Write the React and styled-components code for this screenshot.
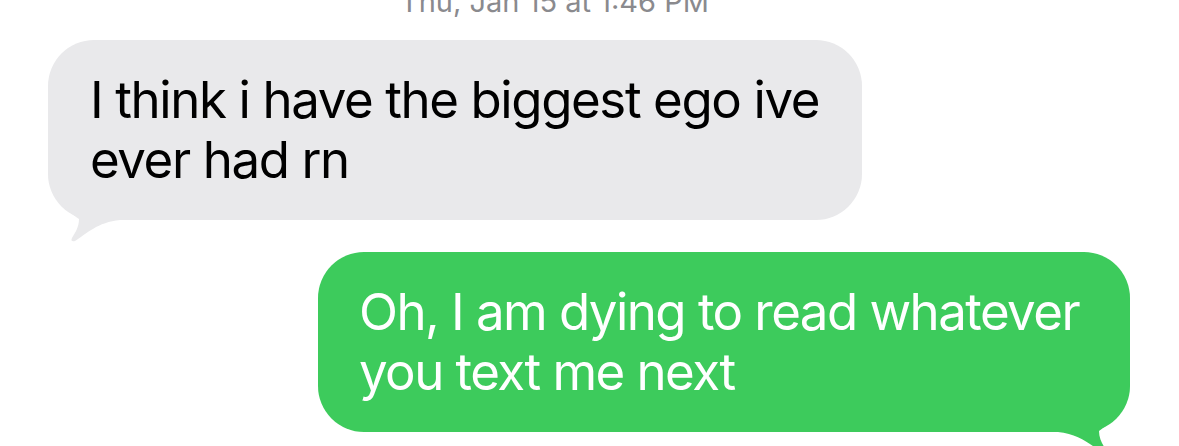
import React from "react";
import styled, { createGlobalStyle } from "styled-components";

const GlobalStyle = createGlobalStyle`
  html, body {
    margin: 0;
    padding: 0;
    background: #ffffff;
  }
  body {
    font-family: Inter, "Noto Sans", "Liberation Sans", sans-serif;
    -webkit-font-smoothing: antialiased;
  }
`;

const Thread = styled.div`
  width: 1179px;
  height: 446px;
  overflow: hidden;
  box-sizing: border-box;
  padding: 0 49px 0 48px;
  display: flex;
  flex-direction: column;
`;

const Timestamp = styled.div`
  margin-top: -16px;
  padding-left: 352px;
  font-size: 29px;
  line-height: 36px;
  color: #8a8a8e;
  white-space: nowrap;
`;

const Row = styled.div`
  display: flex;
  justify-content: ${(p) => (p.$out ? "flex-end" : "flex-start")};
  margin-top: ${(p) => p.$gap}px;
`;

const Bubble = styled.div`
  position: relative;
  isolation: isolate;
  box-sizing: border-box;
  width: ${(p) => p.$width}px;
  height: 180px;
  padding: 30px 0 30px ${(p) => (p.$out ? 41 : 42)}px;
  border-radius: 46px;
  background: ${(p) => (p.$out ? "#3dcb5c" : "#e9e9eb")};
  color: ${(p) => (p.$out ? "#ffffff" : "#000000")};
  font-size: 51px;
  line-height: 60px;
  letter-spacing: ${(p) => (p.$out ? "-1.55px" : "-1.4px")};
  white-space: nowrap;
`;

const TailSvg = styled.svg`
  position: absolute;
  z-index: -1;
  top: calc(100% - 50px);
  ${(p) => (p.$out ? "right: 0;" : "left: 0;")}
  width: 80px;
  height: 72px;
  transform: ${(p) => (p.$out ? "scaleX(-1)" : "none")};
  overflow: visible;
`;

function Tail({ out, color }) {
  return (
    <TailSvg $out={out} viewBox="0 0 80 72" aria-hidden="true">
      <path
        d="M0,0 C1,22 16,38 31,49 C31,57 27,63 24,68 Q22,72 27,71 C38,64 50,52 72,50 L80,50 L80,0 Z"
        fill={color}
      />
    </TailSvg>
  );
}

export default function App() {
  return (
    <>
      <GlobalStyle />
      <Thread>
        <Timestamp>Thu, Jan 15 at 1:46 PM</Timestamp>
        <Row $gap={20}>
          <Bubble $width={814}>
            I think i have the biggest ego ive
            <br />
            ever had rn
            <Tail color="#e9e9eb" />
          </Bubble>
        </Row>
        <Row $out $gap={32}>
          <Bubble $out $width={812}>
            Oh, I am dying to read whatever
            <br />
            you text me next
            <Tail out color="#3dcb5c" />
          </Bubble>
        </Row>
      </Thread>
    </>
  );
}
